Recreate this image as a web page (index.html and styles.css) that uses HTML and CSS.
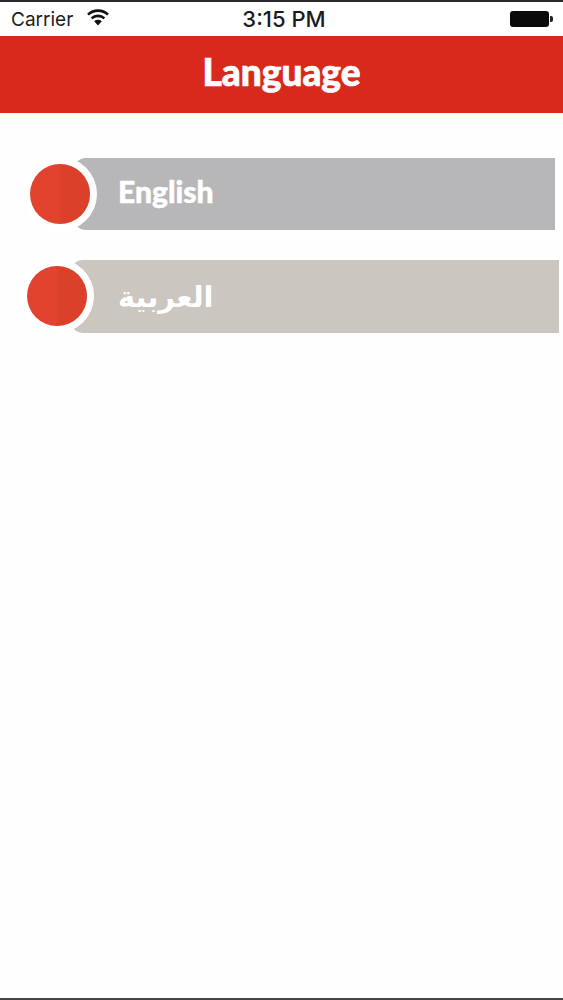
FILE: index.html
```html
<!DOCTYPE html>
<html lang="en">
<head>
  <meta charset="UTF-8">
  <title>Language</title>
  <link rel="stylesheet" href="styles.css">
</head>
<body>

  <!-- Status Bar -->
  <div class="status-bar">
    <div class="status-left">
      <span class="carrier">Carrier</span>
      <svg class="wifi" width="24" height="18" viewBox="0 0 24 18">
        <path d="M12 17.5 8.2 13.2a5.6 5.6 0 0 1 7.6 0z" fill="#111"/>
        <path d="M5.6 10.4a9.4 9.4 0 0 1 12.8 0" fill="none" stroke="#111" stroke-width="2.6"/>
        <path d="M2 6.6a14.6 14.6 0 0 1 20 0" fill="none" stroke="#111" stroke-width="2.6"/>
      </svg>
    </div>
    <div class="clock">3:15 PM</div>
    <div class="battery"><span class="battery-body"></span><span class="battery-tip"></span></div>
  </div>

  <!-- Header -->
  <header class="header"><h1>Language</h1></header>

  <!-- Language List -->
  <div class="languages">
    <div class="language english">
      <span class="dot"></span>
      <span class="label">English</span>
    </div>
    <div class="language arabic">
      <span class="dot"></span>
      <span class="label" lang="ar" dir="rtl">العربية</span>
    </div>
  </div>

</body>
</html>
```

FILE: styles.css
```css
/* RESET & BASE */
* {
  margin: 0;
  padding: 0;
  box-sizing: border-box;
}
html, body {
  height: 1000px;
  overflow: hidden;
}
body {
  background: #fefefe;
  border-top: 2px solid #2b2b2b;
  border-bottom: 2px solid #444;
  font-family: 'Liberation Sans', sans-serif;
}

/* STATUS BAR */
.status-bar {
  height: 34px;
  padding: 0 10px 0 11px;
  display: flex;
  align-items: center;
  justify-content: space-between;
  background: #fff;
  color: #1c1c1c;
}
.status-left {
  width: 114px;
  display: flex;
  align-items: center;
  gap: 13px;
}
.carrier {
  font-family: 'Inter', sans-serif;
  font-size: 19px;
}
.wifi {
  flex: none;
  margin-top: -4px;
}
.clock {
  font-family: 'Inter', sans-serif;
  font-size: 22px;
  font-weight: 500;
}
.battery {
  width: 110px;
  display: flex;
  align-items: center;
  justify-content: flex-end;
  gap: 1px;
}
.battery-body {
  width: 39px;
  height: 16px;
  background: #0a0a0a;
  border-radius: 3px;
}
.battery-tip {
  width: 3px;
  height: 6px;
  background: #222;
  border-radius: 0 2px 2px 0;
}

/* HEADER */
.header {
  height: 77px;
  padding-bottom: 7px;
  display: flex;
  align-items: center;
  justify-content: center;
  background: #d9291c;
}
.header h1 {
  color: #fff;
  font-family: 'Lato', sans-serif;
  font-size: 37px;
  font-weight: 900;
  line-height: 1;
  -webkit-text-stroke: 0.7px #fff;
}

/* LANGUAGE ROWS */
.languages {
  padding-top: 45px;
  display: flex;
  flex-direction: column;
  gap: 30px;
}
.language {
  height: 72px;
  display: flex;
  align-items: center;
  border-radius: 10px 0 0 10px;
  color: #fff;
}
.english {
  margin: 0 8px 0 75px;
  background: #b7b6b9;
}
.arabic {
  height: 73px;
  margin: 0 4px 0 72px;
  background: #cbc6c0;
}
.dot {
  flex: none;
  width: 60px;
  height: 60px;
  margin-left: -45px;
  border-radius: 50%;
  background: linear-gradient(90deg, #e2432f 45%, #db402b 55%);
  box-shadow: 0 0 0 7px #fff;
}
.arabic .dot {
  margin-top: -2px;
}
.label {
  margin-left: 28px;
}
.english .label {
  margin-bottom: 6px;
  font-family: 'Lato', sans-serif;
  font-size: 30px;
  font-weight: 900;
  -webkit-text-stroke: 0.5px #fff;
}
.arabic .label {
  margin-left: 31px;
  font-family: 'DejaVu Sans', sans-serif;
  font-size: 29px;
  font-weight: 700;
}
```
